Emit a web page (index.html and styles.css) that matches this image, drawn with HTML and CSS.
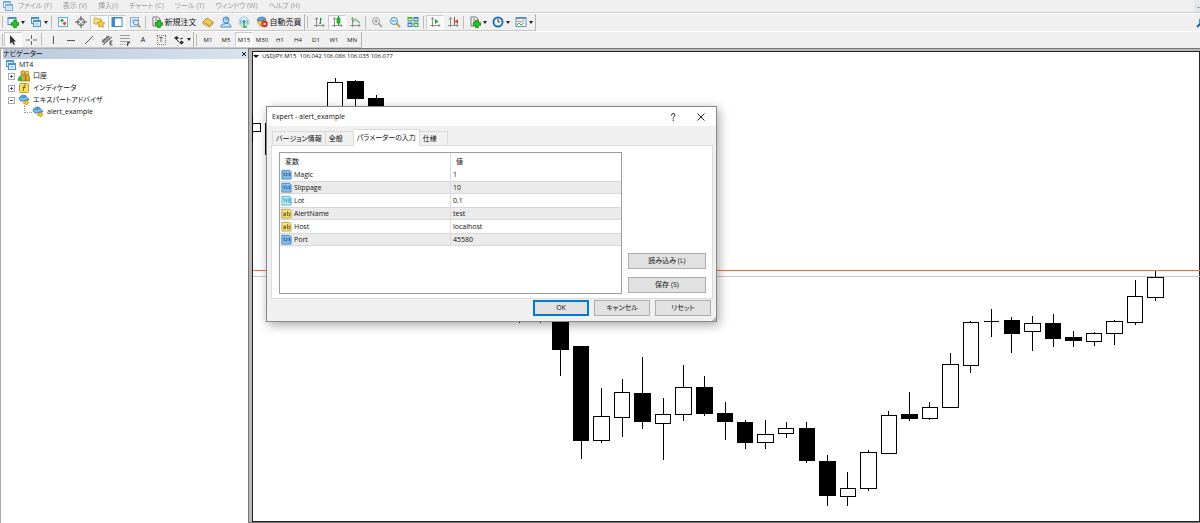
FILE: index.html
```html
<!DOCTYPE html>
<html lang="ja">
<head>
    <meta charset="UTF-8">
    <title>MT4</title>
    <link rel="stylesheet" href="styles.css">
</head>
<body>
    <svg class="defs" aria-hidden="true">
        <symbol id="windows" viewBox="0 0 12 12">
            <rect x="1.5" y="1.5" width="7" height="6" fill="#e4f2fc" stroke="#4a94d0"/>
            <path d="M1 2h8" stroke="#4a94d0" stroke-width="2"/>
            <rect x="3.5" y="4.5" width="7" height="6" fill="#e4f2fc" stroke="#4a94d0"/>
            <path d="M3 5h8" stroke="#4a94d0" stroke-width="2"/>
            <path d="M5 8h4" stroke="#7ab7e4"/>
        </symbol>
        <symbol id="expert" viewBox="0 0 12 12">
            <path d="M1 5c0-2 2-4 5-4 2 0 3 2 3 3l2 1c0 2-5 3-8 2z" fill="#4d9fd8" stroke="#2a6da5" stroke-width=".6"/>
            <path d="M2 4.500q3 2 7-.5" fill="none" stroke="#a9dbf7"/>
            <path d="M4 7h3v3H5z" fill="#f3cf55"/>
            <path d="M8.500 6 11 8.500 8.500 11 6 8.500z" fill="#f5c52c" stroke="#a67a10" stroke-width=".7"/>
        </symbol>
        <symbol id="int" viewBox="0 0 12 12">
            <path d="M1 1.500h8.500L11 3v8H1z" fill="#8cc4f0" stroke="#4085c4"/>
            <path d="M2.500 5 3.500 4v4M5 4.500h1.500V6L5 7.500h2M8 4.500h1.500v3H8M8.500 6h1" fill="none" stroke="#163f78" stroke-width=".8"/>
        </symbol>
        <symbol id="double" viewBox="0 0 12 12">
            <path d="M1 1.500h8.500L11 3v8H1z" fill="#b9eaf8" stroke="#53b3d4"/>
            <path d="M2 4h1.500v4M5 4l1 4 1-4M8.500 4H10v4H8.500z" fill="none" stroke="#2487ad" stroke-width=".7"/>
        </symbol>
        <symbol id="string" viewBox="0 0 12 12">
            <path d="M1 1.500h8.500L11 3v8H1z" fill="#f6e489" stroke="#c3a13a"/>
            <path d="M2.500 5.500H5v3H3V7h2M7 3.500v5h2.500v-3H7" fill="none" stroke="#6b5310" stroke-width=".9"/>
        </symbol>
        <symbol id="plus" viewBox="0 0 8 8">
            <path d="M3 1h2v2h2v2H5v2H3V5H1V3h2z" fill="#25cf25" stroke="#078407" stroke-width=".7"/>
        </symbol>
        <symbol id="axes" viewBox="0 0 12 12">
            <path d="M3.500 2v9M1 9.500h10M2 3.500l1.500-2 1.500 2M9.500 8l1.500 1.500L9.500 11" fill="none" stroke="#777" stroke-width=".8"/>
        </symbol>
        <symbol id="sheet" viewBox="0 0 12 12">
            <path d="M2 1h5l2 2v7H2z" fill="#fafafa" stroke="#777"/>
            <path d="M4 3h2M4 5h3M4 7h3" stroke="#777"/>
        </symbol>
    </svg>

    <nav class="menubar">
        <svg class="icon"><use href="#windows"/></svg>
        <button>ファイル (F)</button>
        <button>表示 (V)</button>
        <button>挿入(I)</button>
        <button>チャート (C)</button>
        <button>ツール (T)</button>
        <button>ウィンドウ (W)</button>
        <button>ヘルプ (H)</button>
        <button class="minimize" aria-label="最小化"></button>
    </nav>

    <div class="toolbar">
        <div class="group">
            <button class="tool drop" aria-label="新規チャート">
                <svg class="icon" viewBox="0 0 12 12"><rect x="1" y="1.500" width="8" height="7" fill="#eef7fd" stroke="#4a8fc8"/><path d="M1 2h8" stroke="#4a8fc8" stroke-width="2"/><use href="#plus" x="3" y="3" width="10" height="10"/></svg>
            </button>
            <button class="tool drop" aria-label="チャートの組表示">
                <svg class="icon"><use href="#windows"/></svg>
            </button>
            <span class="sep"></span>
            <button class="tool" aria-label="気配値表示">
                <svg class="icon" viewBox="0 0 12 12"><rect x="1.500" y="1.500" width="9" height="9" fill="#f4faff" stroke="#6fa9d8"/><path d="M3 4.500 5 2.500l2 2-2 2z" fill="#27ad37"/><path d="M5.500 7.500 7.500 5.500l2 2-2 2z" fill="#e34b2f"/></svg>
            </button>
            <button class="tool" aria-label="データウィンドウ">
                <svg class="icon" viewBox="0 0 12 12"><circle cx="6" cy="6" r="3.500" fill="none" stroke="#555"/><path d="M6 0v5M6 7v5M0 6h5M7 6h5" stroke="#555"/></svg>
            </button>
            <button class="tool pressed" aria-label="ナビゲーター">
                <svg class="icon" viewBox="0 0 12 12"><path d="M1 2h3l1 1h3v5H1z" fill="#f6df80" stroke="#c39b2b" stroke-width=".8"/><path d="m8 4 1.200 2.400 2.600.3-1.900 1.800.5 2.700L8 10l-2.400 1.200.5-2.700-1.900-1.800 2.600-.3z" fill="#ffcf3a" stroke="#ba8613" stroke-width=".7"/></svg>
            </button>
            <button class="tool pressed" aria-label="ターミナル">
                <svg class="icon" viewBox="0 0 12 12"><rect x="1" y="1.500" width="10" height="9" fill="#fff" stroke="#3e87c9"/><path d="M2.500 2v8" stroke="#3e87c9" stroke-width="3"/><path d="M1 2h10" stroke="#3e87c9"/></svg>
            </button>
            <button class="tool" aria-label="ストラテジーテスター">
                <svg class="icon" viewBox="0 0 12 12"><rect x="1.500" y="1.500" width="8" height="9" fill="#e4f0fa" stroke="#86b1d5"/><path d="M3 4h5M3 6h2" stroke="#86b1d5"/><circle cx="7" cy="6.500" r="2.500" fill="#d9efff" stroke="#6389ad"/><path d="m9 8.500 2.500 3" stroke="#bc8d36" stroke-width="1.500"/></svg>
            </button>
            <span class="sep"></span>
            <button class="tool label">
                <svg class="icon" viewBox="0 0 12 12"><use href="#sheet" width="12" height="12"/><use href="#plus" x="3" y="3" width="10" height="10"/></svg>新規注文
            </button>
            <button class="tool" aria-label="メタエディター">
                <svg class="icon" viewBox="0 0 12 12"><path d="m1 6 4-4 6 4-3.500 4z" fill="#f5cd4e" stroke="#aa7c18" stroke-width=".8"/><path d="M1 6v2l6.500 3 3.500-3V6L7.500 10z" fill="#fff0b0" stroke="#aa7c18" stroke-width=".7"/></svg>
            </button>
            <button class="tool" aria-label="MQL5コミュニティ">
                <svg class="icon" viewBox="0 0 12 12"><circle cx="6" cy="4" r="3" fill="#b6dcf5" stroke="#3b87c7"/><path d="M5 3h3" stroke="#3b87c7"/><path d="M1 11c-.5-2 1-3 3-3 2-1 7-1 7 3z" fill="#cde7f8" stroke="#3b87c7"/></svg>
            </button>
            <button class="tool" aria-label="シグナル">
                <svg class="icon" viewBox="0 0 12 12"><circle cx="6" cy="6" r="5" fill="#e3f2f8" stroke="#92bdd1" stroke-width=".8"/><path d="M3.500 3.500q-2 2.500 0 5M8.500 3.500q2 2.500 0 5" fill="none" stroke="#559bc0"/><circle cx="6" cy="5.500" r="1.500" fill="#278ac2"/><path d="M6 6v5h3" fill="none" stroke="#35ac3b" stroke-width="1.500"/></svg>
            </button>
            <button class="tool label">
                <svg class="icon" viewBox="0 0 12 12"><path d="M1 5 4 10l5-1 1-5z" fill="#f4ca4b" stroke="#b08322" stroke-width=".7"/><path d="M1 4q1-3 5-3 2 0 4 2-3 3-9 1z" fill="#55a7dc" stroke="#2b72a9" stroke-width=".7"/><circle cx="8.500" cy="8" r="3.300" fill="#dc321d"/><rect x="7.500" y="7" width="2" height="2" fill="#fff"/></svg>自動売買
            </button>
        </div>
        <div class="group">
            <button class="tool" aria-label="バーチャート">
                <svg class="icon" viewBox="0 0 12 12"><use href="#axes" width="12" height="12"/><path d="M7.500 2v6M7.500 3H9M6 7h1.500" stroke="#159a25" fill="none"/></svg>
            </button>
            <button class="tool pressed" aria-label="ローソク足">
                <svg class="icon" viewBox="0 0 12 12"><use href="#axes" width="12" height="12"/><path d="M7.500 0v9" stroke="#128a20"/><rect x="6" y="2" width="3" height="5" fill="#1fc12f" stroke="#128a20" stroke-width=".6"/></svg>
            </button>
            <button class="tool" aria-label="ラインチャート">
                <svg class="icon" viewBox="0 0 12 12"><use href="#axes" width="12" height="12"/><path d="M4 6q3-5 4-1l3 2" fill="none" stroke="#20a52e"/></svg>
            </button>
            <span class="sep"></span>
            <button class="tool" aria-label="ズームイン">
                <svg class="icon" viewBox="0 0 12 12"><path d="m7 7 4 4" stroke="#aaa" stroke-width="2"/><circle cx="5" cy="5" r="3.500" fill="#f5f5f5" stroke="#999"/><path d="M3 5h4M5 3v4" stroke="#999"/></svg>
            </button>
            <button class="tool" aria-label="ズームアウト">
                <svg class="icon" viewBox="0 0 12 12"><path d="m7 7 4 4" stroke="#cda040" stroke-width="2"/><circle cx="5" cy="5" r="3.500" fill="#e6f5ff" stroke="#3b8bcb"/><path d="M3 5h4" stroke="#3b8bcb"/></svg>
            </button>
            <button class="tool" aria-label="ウィンドウの整列">
                <svg class="icon" viewBox="0 0 12 12"><path d="M.5 1h5v4.500h-5zM6.500 6.500h5V11h-5z" fill="#3eac42"/><path d="M6.500 1h5v4.500h-5zM.5 6.500h5V11h-5z" fill="#327dc6"/><path d="M1.500 3.500h3M7.500 3.500h3M1.500 9h3M7.500 9h3" stroke="#fff" stroke-width="1.500"/></svg>
            </button>
            <span class="sep"></span>
            <button class="tool pressed" aria-label="自動スクロール">
                <svg class="icon" viewBox="0 0 12 12"><use href="#axes" width="12" height="12"/><path d="m6 3 3.500 2.500L6 8z" fill="#17a929"/></svg>
            </button>
            <button class="tool" aria-label="チャートシフト">
                <svg class="icon" viewBox="0 0 12 12"><use href="#axes" width="12" height="12"/><path d="M7.500 1v8" stroke="#666"/><path d="M11 3v5L7.500 5.500z" fill="#d84c2e"/></svg>
            </button>
            <span class="sep"></span>
            <button class="tool drop" aria-label="インディケータ">
                <svg class="icon" viewBox="0 0 12 12"><use href="#sheet" width="12" height="12"/><use href="#plus" x="3" y="3" width="10" height="10"/></svg>
            </button>
            <button class="tool drop" aria-label="時間足">
                <svg class="icon" viewBox="0 0 12 12"><circle cx="6" cy="6" r="4.500" fill="#f4faff" stroke="#2270bd" stroke-width="2"/><path d="M6 3v3h2" fill="none" stroke="#333"/></svg>
            </button>
            <button class="tool drop" aria-label="定型チャート">
                <svg class="icon" viewBox="0 0 12 12"><rect x="1" y="1.500" width="10" height="9" fill="#f3faff" stroke="#5593c9"/><path d="M1 2h10" stroke="#5593c9" stroke-width="2"/><path d="m2 6 2-1 2 1 3-2" fill="none" stroke="#c97947"/><path d="m2 9 2-2 2 2 3-2" fill="none" stroke="#3e9e57"/></svg>
            </button>
        </div>
        <svg class="search" viewBox="0 0 12 12"><path d="m1 11 4-4" stroke="#1e66b0" stroke-width="2"/><circle cx="7" cy="5" r="3" fill="#fff" stroke="#3b86cc" stroke-width="2"/></svg>
    </div>

    <div class="toolbar">
        <div class="group">
            <button class="tool pressed" aria-label="カーソル">
                <svg class="icon" viewBox="0 0 12 12"><path d="M3 1v9l2-2 1.500 3 1.500-.7L6.500 7.500H9z" fill="#333"/></svg>
            </button>
            <button class="tool" aria-label="クロスヘア">
                <svg class="icon" viewBox="0 0 12 12"><path d="M6.500 1v4M6.500 7v4M1 6h4M8 6h4" stroke="#666"/></svg>
            </button>
            <span class="sep"></span>
            <button class="tool" aria-label="垂直線">
                <svg class="icon" viewBox="0 0 12 12"><path d="M6.500 2v8" stroke="#555"/></svg>
            </button>
            <button class="tool" aria-label="水平線">
                <svg class="icon" viewBox="0 0 12 12"><path d="M2 6.500h8" stroke="#555"/></svg>
            </button>
            <button class="tool" aria-label="トレンドライン">
                <svg class="icon" viewBox="0 0 12 12"><path d="m2 10 8-8" stroke="#555"/></svg>
            </button>
            <button class="tool" aria-label="チャネル">
                <svg class="icon" viewBox="0 0 12 12"><path d="m1 8 7-6M2 11l9-8M2 5v4M4 4v5M6 2v5M8 2v4M9 7h2.500M9 9h2M9 11h2.500M9 7v4" fill="none" stroke="#444" stroke-width=".9"/></svg>
            </button>
            <button class="tool" aria-label="フィボナッチ">
                <svg class="icon" viewBox="0 0 12 12"><path d="M1 1.500h10M1 4.500h10M1 7.500h10" stroke="#999"/><path d="M1 10.500h6" stroke="#999" stroke-dasharray="1 1"/><path d="M8.500 12V8.500H11M8.500 10H10" fill="none" stroke="#444"/></svg>
            </button>
            <button class="tool letter">A</button>
            <button class="tool letter"><span class="boxed">T</span></button>
            <button class="tool drop" aria-label="矢印">
                <svg class="icon" viewBox="0 0 12 12"><path d="m1 4 2.500-2L6 4 3.500 6zM6 8.500l2.500-2 2.500 2-2.500 2z" fill="#333"/><path d="m3 5 3 3M7 5l3-1" stroke="#333"/></svg>
            </button>
        </div>
        <div class="group">
            <button class="tool">M1</button>
            <button class="tool">M5</button>
            <button class="tool pressed">M15</button>
            <button class="tool">M30</button>
            <button class="tool">H1</button>
            <button class="tool">H4</button>
            <button class="tool">D1</button>
            <button class="tool">W1</button>
            <button class="tool">MN</button>
        </div>
    </div>

    <main class="workspace">
        <aside class="navigator">
            <header class="navigator-title">ナビゲーター<button aria-label="閉じる"><svg viewBox="0 0 6 6"><path d="m1 1 4 4m0-4L1 5" stroke="#111"/></svg></button></header>
            <ul class="tree">
                <li class="root"><svg class="icon"><use href="#windows"/></svg>MT4</li>
                <li>
                    <button class="expander" aria-label="展開"><svg viewBox="0 0 5 5"><path d="M1 2.500h3M2.500 1v3" stroke="#345a91"/></svg></button>
                    <svg class="icon" viewBox="0 0 12 12"><circle cx="5" cy="3" r="2.200" fill="#e8bb38" stroke="#916d13" stroke-width=".7"/><circle cx="9" cy="3" r="2" fill="#f3d262" stroke="#916d13" stroke-width=".7"/><path d="M2 11V6l3-1h5l2 2v4z" fill="#dba829" stroke="#916d13" stroke-width=".7"/><path d="M0 11V8l2-2 2 2v3z" fill="#23b53c"/><path d="M7.500 6v5" stroke="#916d13"/></svg>口座
                </li>
                <li>
                    <button class="expander" aria-label="展開"><svg viewBox="0 0 5 5"><path d="M1 2.500h3M2.500 1v3" stroke="#345a91"/></svg></button>
                    <svg class="icon" viewBox="0 0 12 12"><rect x="1.500" y="1.500" width="9" height="9" rx="1" fill="#f9dd63" stroke="#c29c24"/><path d="M8 3H6.500L5 9M4.500 5.500h3" fill="none" stroke="#8a6510"/></svg>インディケータ
                </li>
                <li>
                    <button class="expander" aria-label="折りたたむ"><svg viewBox="0 0 5 5"><path d="M1 2.500h3" stroke="#345a91"/></svg></button>
                    <svg class="icon"><use href="#expert"/></svg>エキスパートアドバイザ
                </li>
                <li class="leaf"><svg class="icon"><use href="#expert"/></svg>alert_example</li>
            </ul>
        </aside>

        <section class="chart">
            <h1 class="chart-title">USDJPY,M15&nbsp; 106.042 106.086 106.035 106.077</h1>
            <!-- candles are plotted in window coordinates -->
            <svg class="candles" shape-rendering="crispEdges">
                <g transform="translate(-252 -51)">
                    <path d="M253 276.500h2000" stroke="#c8c8c8"/>
                    <path d="M253 270.500h2000" stroke="#ff6a30"/>
                    <path stroke="#000" d="M252.500 116v25M265.500 123v32M335.500 78v30M355.500 80v27M376.500 95v12M519.500 300v23M540.500 300v23M560.500 300v76M581.500 346v113M601.500 388v55M622.500 379v58M642.500 357v72M663.500 398v62M683.500 365v56M704.500 376v40M725.500 402v38M745.500 420v29M765.500 420v29M786.500 422v16M806.500 422v41M827.500 455v51M847.500 472v34M868.500 450v41M888.500 411v42M909.500 392v29M929.500 402v18M950.500 353v54M970.500 321v52M991.500 309v28M984 321.500h15M1011.500 317v36M1032.500 316v35M1053.500 314v33M1073.500 331v16M1094.500 332v14M1114.500 320v25M1135.500 280v45M1155.500 271v30"/>
                    <path fill="#fff" stroke="#000" d="M252.500 123.500h8v8h-8zM327.500 82.500h15v30h-15zM593.500 416.500h16v24h-16zM614.500 392.500h15v25h-15zM655.500 414.500h15v9h-15zM675.500 387.500h16v27h-16zM757.500 434.500h16v8h-16zM778.500 428.500h15v5h-15zM840.500 488.500h15v8h-15zM860.500 452.500h16v36h-16zM881.500 415.500h15v38h-15zM922.500 407.500h15v11h-15zM942.500 364.500h16v43h-16zM963.500 322.500h15v43h-15zM1024.500 323.500h16v8h-16zM1086.500 333.500h15v8h-15zM1106.500 321.500h16v12h-16zM1127.500 296.500h15v26h-15zM1147.500 277.500h16v20h-16z"/>
                    <path fill="#000" d="M347 81h17v18h-17zM368 98h16v20h-16zM552 300h17v50h-17zM573 346h16v95h-16zM634 393h17v29h-17zM696 387h17v27h-17zM717 413h16v9h-16zM737 422h16v21h-16zM799 428h16v33h-16zM819 461h17v35h-17zM901 414h17v5h-17zM1004 320h16v14h-16zM1045 323h16v16h-16zM1065 337h17v4h-17z"/>
                </g>
            </svg>
        </section>
    </main>

    <form class="dialog" role="dialog" aria-labelledby="dialogTitle">
        <header class="dialog-title">
            <span id="dialogTitle">Expert - alert_example</span>
            <button type="button" aria-label="ヘルプ"><svg viewBox="0 0 10 10"><path d="M3.500 3.500q0-2 1.700-2t1.600 1.700c0 1.300-1.600 1.500-1.600 3.300M5.200 7.500V9" fill="none" stroke="#222"/></svg></button>
            <button type="button" aria-label="閉じる"><svg viewBox="0 0 10 10"><path d="m1.500 1.500 7 7m0-7-7 7" stroke="#222"/></svg></button>
        </header>
        <div class="tabs" role="tablist">
            <button type="button" role="tab">バージョン情報</button>
            <button type="button" role="tab">全般</button>
            <button type="button" role="tab" class="active" aria-selected="true">パラメーターの入力</button>
            <button type="button" role="tab">仕様</button>
        </div>
        <div class="pane">
            <div class="list">
                <table>
                    <thead>
                        <tr><th>変数</th><th>値</th></tr>
                    </thead>
                    <tbody>
                        <tr><td><svg class="type"><use href="#int"/></svg>Magic</td><td>1</td></tr>
                        <tr><td><svg class="type"><use href="#int"/></svg>Slippage</td><td>10</td></tr>
                        <tr><td><svg class="type"><use href="#double"/></svg>Lot</td><td>0.1</td></tr>
                        <tr><td><svg class="type"><use href="#string"/></svg>AlertName</td><td>test</td></tr>
                        <tr><td><svg class="type"><use href="#string"/></svg>Host</td><td>localhost</td></tr>
                        <tr><td><svg class="type"><use href="#int"/></svg>Port</td><td>45580</td></tr>
                    </tbody>
                </table>
            </div>
            <div class="side">
                <button type="button" class="push">読み込み (L)</button>
                <button type="button" class="push">保存 (S)</button>
            </div>
        </div>
        <footer class="actions">
            <button type="button" class="push default">OK</button>
            <button type="button" class="push">キャンセル</button>
            <button type="button" class="push">リセット</button>
        </footer>
    </form>
</body>
</html>
```

FILE: styles.css
```css
* {
    box-sizing: border-box;
}

body {
    margin: 0;
    height: 100vh;
    display: flex;
    flex-direction: column;
    overflow: hidden;
    background: #f0f0f0;
    color: #111;
    font: 7px/12px "Open Sans", "Noto Sans CJK JP", sans-serif;
    font-feature-settings: "palt";
}

button {
    margin: 0;
    padding: 0;
    border: 0;
    background: none;
    color: inherit;
    font: inherit;
    font-feature-settings: inherit;
    white-space: nowrap;
}

.defs {
    position: absolute;
    width: 0;
    height: 0;
}

.icon {
    width: 12px;
    height: 12px;
    flex: none;
}

/* menu */
.menubar {
    display: flex;
    gap: 11px;
    height: 13px;
    padding-left: 2px;
    border-bottom: 1px solid #d0d0d0;
    color: #999;
}

.menubar .icon {
    margin-right: -7px;
    opacity: 0.7;
}

.minimize {
    width: 6px;
    height: 12px;
    margin-left: auto;
    background: linear-gradient(#7aa5c5, #7aa5c5) 3px 7px / 3px 1px no-repeat #e4e6e8;
}

/* toolbars */
.toolbar {
    display: flex;
    height: 17px;
    border-top: 1px solid #fff;
    font-size: 6px;
}

.toolbar:nth-of-type(1) {
    height: 18px;
}

.group {
    display: flex;
    align-items: center;
    padding-left: 4px;
    border-right: 1px solid #b5b5b5;
    border-bottom: 1px solid #c8c8c8;
    background: linear-gradient(#bbb, #bbb) 2px 2px / 1px 12px no-repeat;
}

.group + .group {
    padding-left: 5px;
}

.tool {
    display: flex;
    align-items: center;
    justify-content: center;
    width: 18px;
    height: 15px;
}

.pressed {
    background: #f9f9f9;
    border: 1px solid #ccc;
    border-right-color: #fff;
    border-bottom-color: #fff;
}

.drop {
    width: 23px;
    gap: 2px;
}

.drop::after {
    content: "";
    border: 2px solid transparent;
    border-top: 3px solid #222;
    border-bottom: 0;
}

.label {
    width: 51px;
    gap: 2px;
    font-size: 8px;
}

.letter {
    font-size: 7px;
}

.sep {
    width: 1px;
    height: 13px;
    margin: 0 2px 0 1px;
    background: #bbb;
}

.boxed {
    width: 9px;
    border: 1px dotted #777;
    line-height: 8px;
}

.search {
    width: 12px;
    height: 12px;
    margin: 2px -8px 0 auto;
}

/* work area */
.workspace {
    flex: 1;
    min-height: 0;
    display: flex;
    border-top: 1px solid #aaa;
}

.navigator {
    width: 249px;
    flex: none;
    padding-left: 2px;
    background: #fff;
    border-left: 1px solid #aaa;
}

.navigator-title {
    display: flex;
    justify-content: space-between;
    align-items: center;
    height: 10px;
    background: linear-gradient(90deg, #b9c9dc, #d7e3ef);
}

.navigator-title svg {
    display: block;
    width: 6px;
    height: 6px;
    margin-right: 2px;
}

.tree {
    margin: 0;
    padding: 0 0 0 5px;
    list-style: none;
    line-height: 10px;
}

.tree li {
    display: flex;
    align-items: center;
    gap: 3px;
    height: 12px;
}

.tree .root {
    gap: 2px;
    height: 11px;
    margin-left: -3px;
}

.expander {
    width: 7px;
    height: 7px;
    border: 1px solid #aaa;
    background: #fff;
}

.expander svg {
    display: block;
    width: 5px;
    height: 5px;
}

.tree .leaf {
    height: 11px;
    padding-left: 16px;
}

.leaf::before {
    content: "";
    width: 7px;
    height: 7px;
    margin-bottom: 6px;
    margin-right: -3px;
    border-left: 1px dotted #999;
    border-bottom: 1px dotted #999;
}

.chart {
    flex: 1;
    min-width: 0;
    display: grid;
    margin-bottom: 1px;
    border: solid #b8b8b8;
    border-width: 2px 0 0 3px;
    outline: 1px solid #777;
    background: #fff;
    box-shadow: inset 0 0 0 1px #222;
}

.chart-title,
.candles {
    grid-area: 1 / 1;
}

.chart-title {
    margin: 0 10px;
    font-size: 6px;
    line-height: 10px;
    font-weight: normal;
    align-self: start;
}

.chart-title::before {
    content: "";
    float: left;
    margin: 4px 3px 0 -9px;
    border: 3px solid transparent;
    border-top-color: #111;
    border-bottom: 0;
}

.candles {
    width: 100%;
    height: 100%;
}

/* expert properties window */
.dialog {
    position: absolute;
    left: 266px;
    top: 106px;
    width: 451px;
    border: 1px solid #888;
    background: #f0f0f0;
    box-shadow: 2px 3px 10px rgba(0, 0, 0, 0.35);
}

.dialog-title {
    display: flex;
    align-items: center;
    gap: 18px;
    height: 19px;
    padding: 0 10px 0 5px;
    background: #fff;
}

.dialog-title span {
    flex: 1;
}

.dialog-title svg {
    display: block;
    width: 10px;
    height: 10px;
}

.tabs {
    display: flex;
    align-items: flex-end;
    padding: 3px 5px 0;
}

.tabs button {
    height: 14px;
    padding: 0 3px;
    border: 1px solid #d9d9d9;
    border-left: 0;
    border-bottom: 0;
}

.tabs button:first-child {
    border-left: 1px solid #d9d9d9;
}

.tabs button:nth-child(2),
.tabs button:last-child {
    padding-right: 10px;
}

.tabs .active {
    height: 17px;
    margin-bottom: -1px;
    background: #fff;
}

.pane {
    display: flex;
    gap: 6px;
    margin: 0 3px 0 4px;
    padding: 6px 6px 4px 7px;
    border: 1px solid #dcdcdc;
    background: #fff;
}

.list {
    flex: 1;
    height: 142px;
    border: 1px solid #999da5;
}

table {
    width: 100%;
    border-collapse: collapse;
    table-layout: fixed;
}

th,
td {
    height: 13px;
    padding: 0 2px;
    line-height: 12px;
    text-align: left;
    font-weight: normal;
    white-space: nowrap;
}

th {
    height: 15px;
    padding: 2px 5px 0;
}

td:first-child {
    padding-left: 1px;
}

th:first-child,
td:first-child {
    width: 50%;
    border-right: 1px solid #dcdcdc;
}

tbody tr:nth-child(even) {
    background: #ebebeb;
    box-shadow: inset 0 1px #d8d8d8, inset 0 -1px #d8d8d8;
}

.type {
    width: 11px;
    height: 11px;
    margin-right: 2px;
    vertical-align: top;
}

.side {
    display: flex;
    flex-direction: column;
    justify-content: flex-end;
    gap: 8px;
    width: 78px;
    padding-bottom: 1px;
}

.push {
    height: 16px;
    border: 1px solid #adadad;
    background: #e1e1e1;
}

.actions {
    display: flex;
    justify-content: flex-end;
    gap: 5px;
    padding: 1px 5px 5px;
    background: linear-gradient(135deg, transparent 50%, #bbb 50%) right bottom / 4px 4px no-repeat;
}

.actions .push {
    width: 56px;
    line-height: 10px;
}

.actions .default {
    border: 2px solid #0078d7;
}
```
